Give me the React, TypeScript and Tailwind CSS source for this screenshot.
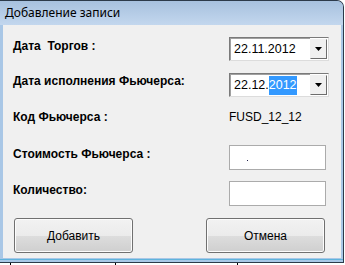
import React from "react";

const label = "text-[12px] leading-[14px] font-bold text-black";
const font = { fontFamily: '"Liberation Sans", Arial, sans-serif' };

function Combo({ value, selected }: { value: string; selected?: string }) {
  return (
    <div className="flex h-[24px] w-[100px] border border-t-[#7a7a7a] border-l-[#7a7a7a] border-b-[#dcdcdc] border-r-[#dcdcdc] bg-white">
      <div className="flex flex-1 items-center border-t border-l border-[#a0a0a0] pl-[3px] text-[12.5px] text-black">
        {value}
        {selected && <span className="bg-[#3399ff] text-white">{selected}</span>}
      </div>
      <div className="my-[1px] mr-[1px] flex w-[17px] items-center justify-center border border-t-[#f0f0f0] border-l-[#f0f0f0] border-b-[#6d6d6d] border-r-[#6d6d6d] bg-[#f0f0f0]">
        <svg width="7" height="4" viewBox="0 0 7 4">
          <path d="M0 0h7L3.5 4z" fill="#000" />
        </svg>
      </div>
    </div>
  );
}

function TextBox({ children }: { children?: React.ReactNode }) {
  return (
    <div className="relative h-[25px] w-[97px] border border-[#ababab] bg-white">{children}</div>
  );
}

function Button({ children }: { children: React.ReactNode }) {
  return (
    <button className="flex h-[35px] w-[119px] items-center justify-center rounded-[3px] border border-[#707070] bg-[linear-gradient(#f2f2f2_0%,#ebebeb_50%,#dddddd_51%,#cfcfcf_100%)] text-[12px] text-black shadow-[inset_0_0_0_1px_#fcfcfc]">
      {children}
    </button>
  );
}

export default function App() {
  return (
    <div className="h-[265px] w-[345px] overflow-hidden bg-white" style={font}>
      <div className="flex h-[263px] w-[344px] flex-col rounded-tr-[7px] border-t border-r border-b border-[#2c3a4a] bg-[#a9c7e6]">
        <div className="flex h-[24px] items-center rounded-tr-[6px] bg-[linear-gradient(#a7c1de,#c3d7ee)] pl-[5px]">
          <span className="text-[12px] text-black" style={{ fontFamily: '"Noto Sans", sans-serif' }}>
            Добавление записи
          </span>
        </div>
        <div className="ml-[3px] mr-[2px] flex h-[233px] flex-col bg-[#f0f0f0] pt-[12px] pl-[10px]">
          <div className="grid grid-cols-[216px_1fr]">
            <div className="h-[36px] pt-[2px]"><div className={label}>Дата&nbsp; Торгов :</div></div>
            <div><Combo value="22.11.2012" /></div>

            <div className="h-[36px] pt-[1px]"><div className={label}>Дата исполнения Фьючерса:</div></div>
            <div><Combo value="22.12." selected="2012" /></div>

            <div className="h-[36px] pt-[1px]"><div className={label}>Код Фьючерса :</div></div>
            <div className="pt-[1px] text-[12px] leading-[14px] text-black">FUSD_12_12</div>

            <div className="h-[36px] pt-[2px]"><div className={label}>Стоимость Фьючерса :</div></div>
            <div>
              <TextBox>
                <span className="absolute left-[17px] top-[14px] h-[1px] w-[1px] bg-[#20204a]" />
              </TextBox>
            </div>

            <div className="h-[37px] pt-[2px]"><div className={label}>Количество:</div></div>
            <div><TextBox /></div>
          </div>
          <div className="ml-[1px] flex gap-[73px]">
            <Button>Добавить</Button>
            <Button>Отмена</Button>
          </div>
        </div>
        <div className="mt-[1px] h-[1px] bg-[#5fb3dc]" />
      </div>
      <div className="flex h-[2px]">
        <div className="ml-[10px] w-[105px] border-l border-black" />
        <div className="w-[122px] border-l border-black" />
        <div className="border-l border-black" />
      </div>
    </div>
  );
}
